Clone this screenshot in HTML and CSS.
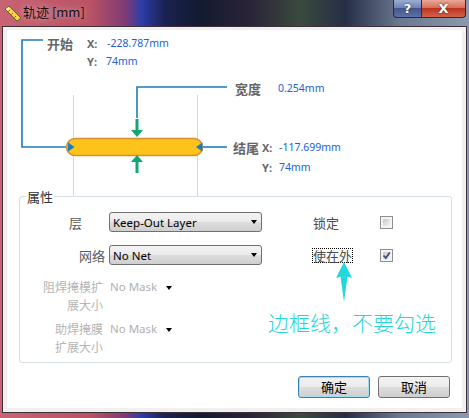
FILE: index.html
```
<!DOCTYPE html>
<html lang="zh-CN">
<head>
    <meta charset="UTF-8">
    <link rel="stylesheet" href="styles.css">
    <title>轨迹 [mm]</title>
</head>
<body>
    <div class="window">
        <div class="titlebar">
            <svg class="app-icon" viewBox="0 0 18 16">
                <polygon points="1,4 5,1 17,13 13,16" fill="#f6d54a" stroke="#6b5a2a" stroke-width="1"/>
                <polygon points="2,4 4.5,2 6,3.5 3.5,5.5" fill="#fff8d0"/>
                <line x1="6" y1="5" x2="4.5" y2="6.5" stroke="#6b5a2a"/>
                <line x1="9" y1="8" x2="7.5" y2="9.5" stroke="#6b5a2a"/>
                <line x1="12" y1="11" x2="10.5" y2="12.5" stroke="#6b5a2a"/>
            </svg>
            <span class="title">轨迹 [mm]</span>
            <div class="caption-btns">
                <span class="cbtn help">?</span>
                <span class="cbtn close">X</span>
            </div>
        </div>
        <div class="client">
            <div class="panel">
                <div class="diagram">
                    <svg width="455" height="166">
                        <!-- guide lines -->
                        <line class="guide" x1="66.5" y1="65" x2="66.5" y2="166"/>
                        <line class="guide" x1="190.5" y1="65" x2="190.5" y2="166"/>
                        <!-- start bracket -->
                        <path class="blue" d="M36 10 H15 V117 H62"/>
                        <!-- width bracket -->
                        <path class="blue" d="M220 57 H130 V88"/>
                        <!-- end line -->
                        <path class="blue" d="M194 117 H220"/>
                        <!-- track -->
                        <rect class="track" x="59.5" y="108.5" width="136" height="17" rx="8.5"/>
                        <polygon class="blue-fill" points="61,112.5 67.5,117 61,121.5"/>
                        <polygon class="blue-fill" points="195.5,112.5 189,117 195.5,121.5"/>
                        <!-- width arrows -->
                        <rect class="green" x="128.5" y="89" width="3" height="12"/>
                        <polygon class="green" points="124,100 136,100 130,107"/>
                        <rect class="green" x="128.5" y="131" width="3" height="12"/>
                        <polygon class="green" points="124,132 136,132 130,125"/>
                        <!-- labels -->
                        <text class="d-lbl" x="40" y="13">开始</text>
                        <text class="d-xy" x="80" y="13">X:</text>
                        <text class="d-val" x="100" y="13">-228.787mm</text>
                        <text class="d-xy" x="80" y="31">Y:</text>
                        <text class="d-val" x="99" y="31">74mm</text>
                        <text class="d-lbl" x="228" y="58">宽度</text>
                        <text class="d-val" x="271" y="58">0.254mm</text>
                        <text class="d-lbl" x="226" y="117">结尾</text>
                        <text class="d-xy" x="255" y="117">X:</text>
                        <text class="d-val" x="272" y="117">-117.699mm</text>
                        <text class="d-xy" x="255" y="137">Y:</text>
                        <text class="d-val" x="272" y="137">74mm</text>
                    </svg>
                </div>

                <div class="group">
                    <span class="legend">属性</span>
                    <div class="row">
                        <span class="lbl lbl-layer">层</span>
                        <div class="select"><span>Keep-Out Layer</span><i class="caret"></i></div>
                        <span class="lbl2">锁定</span>
                        <span class="check"></span>
                    </div>
                    <div class="row">
                        <span class="lbl">网络</span>
                        <div class="select"><span>No Net</span><i class="caret"></i></div>
                        <span class="lbl2"><span class="focus">使在外</span></span>
                        <span class="check">
                            <svg viewBox="0 0 11 11"><path d="M2.5 5.5 L4.8 8 L8.8 2.5" fill="none" stroke="#3d4c82" stroke-width="1.8"/></svg>
                        </span>
                    </div>
                    <div class="row row-mask">
                        <span class="lbl lbl-off">阻焊掩模扩<br>展大小</span>
                        <span class="mask">No Mask</span><i class="caret caret-sm"></i>
                    </div>
                    <div class="row row-mask row-paste">
                        <span class="lbl lbl-off">助焊掩膜<br>扩展大小</span>
                        <span class="mask">No Mask</span><i class="caret caret-sm"></i>
                    </div>
                </div>

                <div class="buttons">
                    <span class="btn btn-default">确定</span>
                    <span class="btn">取消</span>
                </div>

                <svg class="note-arrow" viewBox="0 0 18 42">
                    <polygon points="9,1 17,17 12.5,15.5 9,41 5.5,15.5 1,17" fill="#22d8dc"/>
                </svg>
                <div class="note">边框线，不要勾选</div>
            </div>
        </div>
    </div>
</body>
</html>
```

FILE: styles.css
```
* {
    padding: 0;
    margin: 0;
}

body {
    background: #1a2030;
}

.window {
    display: flex;
    flex-direction: column;
    width: 469px;
    height: 418px;
    background: linear-gradient(90deg, #c86474 0, #ba5264 90px, #803c74 125px, #2c3ca8 142px, #1a2250 165px, #121a30 200px, #2a2438 250px, #3a4a3e 300px, #262e46 345px, #6a7890 400px, #8c9ab0 469px);
    font-family: "Noto Sans", "Noto Sans CJK SC", sans-serif;
}

.titlebar {
    display: flex;
    align-items: flex-start;
    height: 26px;
}

.app-icon {
    width: 18px;
    height: 16px;
    margin: 5px 0 0 4px;
}

.title {
    margin: 4px 0 0 1px;
    font: 13px/16px "Noto Sans CJK SC", sans-serif;
    color: #111;
    text-shadow: 0 0 6px rgba(255, 255, 255, 0.6);
}

.caption-btns {
    display: flex;
    margin-left: auto;
    margin-right: 3px;
}

.cbtn {
    height: 17px;
    border: 1px solid #2a2a38;
    border-top: none;
    color: #fff;
    text-align: center;
    font: bold 13px/17px "DejaVu Sans", sans-serif;
    text-shadow: 0 0 2px #222;
}

.help {
    width: 27px;
    border-radius: 0 0 0 4px;
    background: linear-gradient(#9aaed0, #6a7eb4 50%, #44568e 50%, #5c72aa);
}

.close {
    width: 43px;
    border-left: none;
    border-radius: 0 0 4px 0;
    background: linear-gradient(#eaa898, #d46a56 50%, #bc3420 50%, #d2644a);
}

.client {
    flex: 1;
    margin: 0 2px 5px 2px;
    padding: 3px 4px 4px 4px;
    border: 1px solid #3d3038;
    background: #f0f0f0;
}

.panel {
    position: relative;
    height: 378px;
    background: #fff;
}

.diagram svg {
    display: block;
}

.guide {
    stroke: #d9d9d9;
    stroke-width: 1;
}

.blue {
    fill: none;
    stroke: #1b7cbf;
    stroke-width: 1.6;
}

.blue-fill {
    fill: #1b7cbf;
}

.green {
    fill: #13a674;
}

.track {
    fill: #fdc21c;
    stroke: #d88e2c;
    stroke-width: 1.5;
}

.d-lbl {
    font: bold 13px "Noto Sans CJK SC", sans-serif;
    fill: #666;
    dominant-baseline: central;
}

.d-xy {
    font: bold 11px "Noto Sans", sans-serif;
    fill: #6a6a6a;
    dominant-baseline: central;
}

.d-val {
    font: 10.5px "Noto Sans", sans-serif;
    fill: #2262d2;
    dominant-baseline: central;
}

.group {
    position: relative;
    box-sizing: border-box;
    width: 433px;
    height: 167px;
    margin-left: 12px;
    padding-top: 15px;
    border: 1px solid #d5dfe5;
    border-radius: 3px;
}

.legend {
    position: absolute;
    left: 6px;
    top: -8px;
    padding: 0 1px;
    background: #fff;
    font: 13px/15px "Noto Sans CJK SC", sans-serif;
    color: #333;
}

.row {
    display: flex;
    align-items: center;
    height: 20px;
}

.row + .row {
    margin-top: 13px;
}

.lbl {
    flex: none;
    box-sizing: border-box;
    width: 85px;
    text-align: right;
    font: 13px/15px "Noto Sans CJK SC", sans-serif;
    color: #5a5a5a;
}

.lbl-layer {
    padding-right: 23px;
}

.select {
    display: flex;
    align-items: center;
    box-sizing: border-box;
    width: 153px;
    height: 20px;
    margin-left: 4px;
    padding-left: 3px;
    border: 1px solid #707070;
    border-radius: 3px;
    background: linear-gradient(#f3f3f3, #ebebeb 50%, #dddddd 50%, #cfcfcf);
    font-size: 11.5px;
    color: #000;
}

.caret {
    margin-left: auto;
    margin-right: 4px;
    border-left: 3.5px solid transparent;
    border-right: 3.5px solid transparent;
    border-top: 4px solid #000;
}

.lbl2 {
    flex: none;
    width: 67px;
    margin-left: 51px;
    font: 13px/15px "Noto Sans CJK SC", sans-serif;
    color: #4a4a4a;
}

.focus {
    display: inline-block;
    margin-left: -1px;
    border: 1px dotted #000;
    line-height: 13px;
}

.check {
    position: relative;
    box-sizing: border-box;
    width: 13px;
    height: 13px;
    padding: 2px;
    border: 1px solid #8e8f8f;
    background: linear-gradient(135deg, #c8c8c8, #f6f6f6) content-box, #f4f4f4;
}

.check svg {
    position: absolute;
    left: 0;
    top: 0;
    width: 11px;
    height: 11px;
}

.row-mask {
    align-items: flex-start;
    height: 36px;
}

.row + .row-mask {
    margin-top: 13px;
}

.row-mask + .row-paste {
    margin-top: 6px;
}

.lbl-off {
    padding-right: 2px;
    font-size: 12px;
    line-height: 18px;
    color: #b4b4b4;
}

.mask {
    margin-left: 5px;
    font-size: 11.5px;
    line-height: 18px;
    color: #b0b0b0;
}

.caret-sm {
    margin: 8px 0 0 9px;
    border-left-width: 3px;
    border-right-width: 3px;
}

.buttons {
    display: flex;
    justify-content: flex-end;
    gap: 8px;
    margin-top: 13px;
    padding-right: 12px;
}

.btn {
    box-sizing: border-box;
    width: 72px;
    height: 22px;
    border: 1px solid #707070;
    border-radius: 3px;
    background: linear-gradient(#f3f3f3, #ebebeb 50%, #dddddd 50%, #cfcfcf);
    text-align: center;
    font: 13px/20px "Noto Sans CJK SC", sans-serif;
    color: #000;
}

.btn-default {
    border-color: #3c7fb1;
    box-shadow: inset 0 0 0 1px #a6dbf6;
}

.note-arrow {
    position: absolute;
    left: 328px;
    top: 231px;
    width: 18px;
    height: 42px;
}

.note {
    position: absolute;
    left: 261px;
    top: 278px;
    font: 300 21px/28px "Noto Sans CJK SC", sans-serif;
    color: #22d6da;
}
```
